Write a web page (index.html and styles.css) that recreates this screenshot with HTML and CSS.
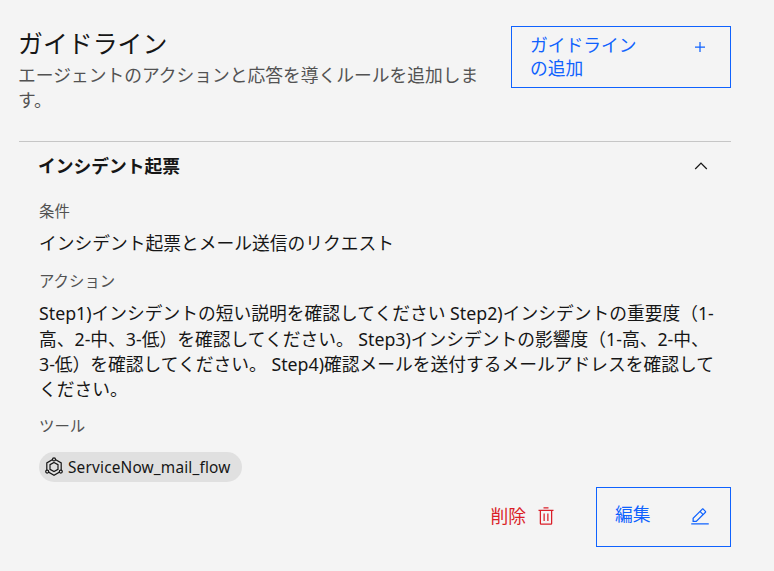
FILE: index.html
```html
<!DOCTYPE html>
<html lang="ja">
<head>
<meta charset="utf-8">
<title>ガイドライン</title>
<link rel="stylesheet" href="styles.css">
</head>
<body>
<main class="page">
  <header class="head">
    <div class="head-text">
      <h1 class="title">ガイドライン</h1>
      <p class="subtitle">エージェントのアクションと応答を導くルールを追加します。</p>
    </div>
    <button class="btn btn-add">
      <span class="btn-label">ガイドラインの追加</span>
      <svg class="icon-plus" viewBox="0 0 32 32" width="20" height="20"><path d="M17 15V8h-2v7H8v2h7v7h2v-7h7v-2z"/></svg>
    </button>
  </header>
  <section class="item">
    <div class="item-head">
      <h2 class="item-title">インシデント起票</h2>
      <svg class="chev" viewBox="0 0 32 32" width="20" height="20"><path d="M16 10l10 10-1.4 1.4L16 12.8l-8.6 8.6L6 20z"/></svg>
    </div>
    <div class="item-body">
      <div class="label label-first">条件</div>
      <p class="value">インシデント起票とメール送信のリクエスト</p>
      <div class="label label-action">アクション</div>
      <p class="value value-long">Step1)インシデントの短い説明を確認してください Step2)インシデントの重要度（1-高、2-中、3-低）を確認してください。 Step3)インシデントの影響度（1-高、2-中、3-低）を確認してください。 Step4)確認メールを送付するメールアドレスを確認してください。</p>
      <div class="label">ツール</div>
      <div class="chip">
        <svg class="chip-icon" viewBox="0 0 20 20" width="20" height="20" fill="none" stroke="#161616" stroke-width="1.2"><path d="M10 1.8l7.2 4.1v8.2L10 18.2l-7.2-4.1V5.9z"/><path d="M10 5.4l4 2.3v4.6l-4 2.3-4-2.3V7.7z"/><circle cx="10" cy="2.4" r="1.5" fill="#e0e0e0"/><circle cx="3.2" cy="14.6" r="1.5" fill="#e0e0e0"/><circle cx="16.8" cy="14.6" r="1.5" fill="#e0e0e0"/></svg>
        <span class="chip-text">ServiceNow_mail_flow</span>
      </div>
    </div>
    <div class="actions">
      <button class="btn-del">
        <span class="del-text">削除</span>
        <svg class="icon-del" viewBox="0 0 32 32" width="20" height="20"><path d="M12 12h2v12h-2zM18 12h2v12h-2z"/><path d="M4 6v2h2v20a2 2 0 0 0 2 2h16a2 2 0 0 0 2-2V8h2V6zm4 22V8h16v20z"/><path d="M12 2h8v2h-8z"/></svg>
      </button>
      <button class="btn btn-edit">
        <span>編集</span>
        <svg class="icon-edit" viewBox="0 0 32 32" width="20" height="20"><path d="M2 26h28v2H2zM25.4 9c.8-.8.8-2 0-2.8l-3.6-3.6c-.8-.8-2-.8-2.8 0l-15 15V24h6.4l15-15zm-5-5L24 7.6l-3 3L17.4 7l3-3zM6 22v-3.6l10-10 3.6 3.6-10 10H6z"/></svg>
      </button>
    </div>
  </section>
</main>
</body>
</html>
```

FILE: styles.css
```css
* { box-sizing: border-box; }
html, body { margin: 0; padding: 0; }
body {
  width: 774px;
  height: 571px;
  overflow: hidden;
  background: #f4f4f4;
  color: #161616;
  font-family: "Noto Sans", "Noto Sans CJK JP", sans-serif;
}
.page { width: 712px; margin-left: 19px; padding-top: 26px; }
.head { display: flex; justify-content: space-between; align-items: flex-start; height: 116px; border-bottom: 1px solid #c6c6c6; }
.head-text { width: 462px; }
.title { margin: 0 0 0 -1px; font-size: 24.9px; line-height: 33px; font-weight: 400; color: #161616; font-family: "Noto Sans CJK JP", sans-serif; }
.subtitle { margin: 4px 0 0 -1px; font-size: 17.75px; line-height: 24.5px; color: #525252; }
.btn { display: flex; justify-content: space-between; background: transparent; border: 1px solid #0f62fe; color: #0f62fe; font: inherit; font-size: 17.75px; line-height: 22.5px; text-align: left; padding: 0; }
.btn-add { width: 220px; height: 62px; padding: 7px 20px 0 18px; }
.btn-label { width: 112px; }
.icon-plus { fill: #0f62fe; margin-top: 3px; }
.item-head { display: flex; justify-content: space-between; align-items: center; height: 50px; padding: 0 20px 2px; background: #f4f4f4; }
.item-title { margin: 0 0 0 -1px; font-size: 17.75px; font-weight: 700; line-height: 24px; }
.chev { fill: #161616; }
.item-body { padding: 0 20px; }
.label { font-size: 15.4px; line-height: 20px; color: #525252; margin-top: 15px; }
.label-first { margin-top: 10px; }
.label-action { margin-top: 16px; }
.value { margin: 9px 0 0; font-size: 17.75px; line-height: 25.3px; }
.value-long { width: 678px; }
.chip { display: inline-flex; align-items: center; height: 30px; margin-top: 15px; padding: 0 11px 0 5px; gap: 4px; border-radius: 15px; background: #e0e0e0; }
.chip-text { font-size: 15.4px; letter-spacing: 0.17px; }
.chip-icon { flex: none; }
.actions { display: flex; justify-content: flex-end; align-items: center; margin-top: 5px; }
.btn-del { display: flex; align-items: center; gap: 10px; background: transparent; border: 0; color: #da1e28; font: inherit; font-size: 17.75px; padding: 0 0 2px; margin-right: 40px; }
.del-text { padding-bottom: 2px; }
.icon-del { fill: #da1e28; }
.btn-edit { width: 135px; height: 60px; padding: 15px 20px 0 18px; }
.icon-edit { fill: #0f62fe; margin-top: 4px; }
```
